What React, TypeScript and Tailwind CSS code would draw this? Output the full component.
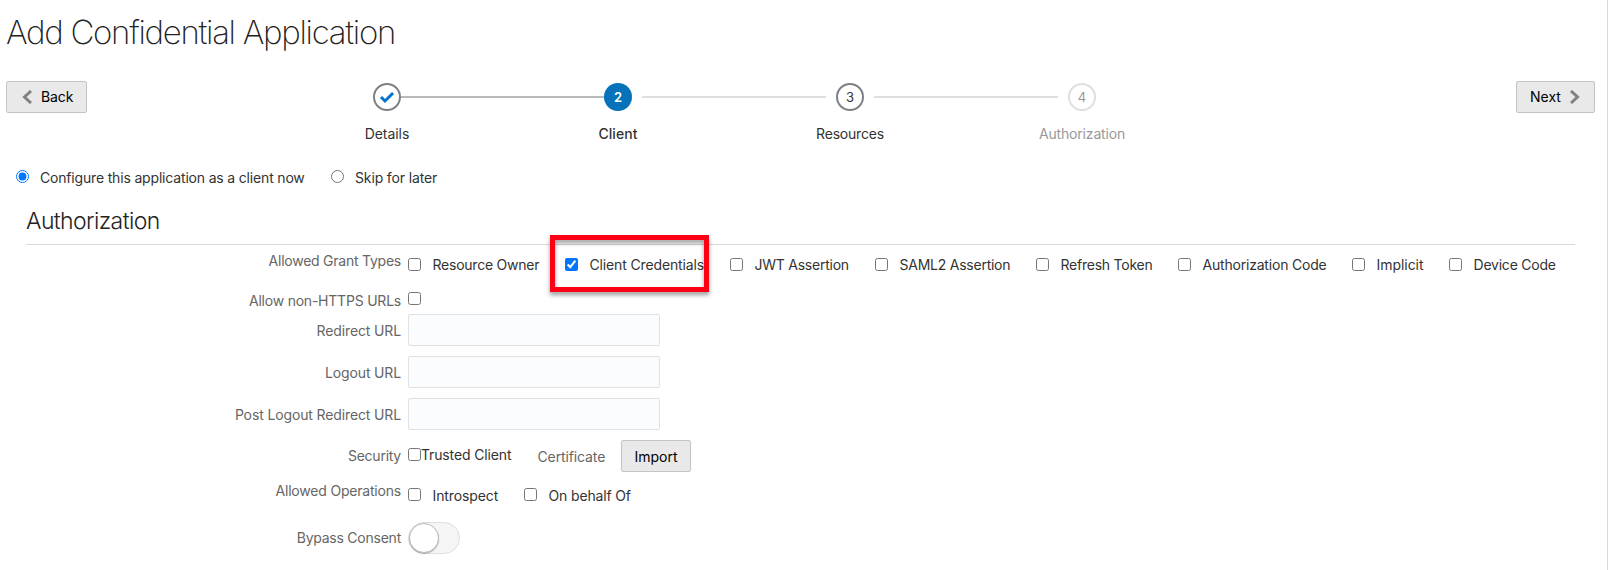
import type { ReactNode } from "react";

type CheckProps = { label: string; checked?: boolean; textClass?: string; boxClass?: string };

function Check({ label, checked = false, textClass = "tracking-[-0.24px]", boxClass = "mt-[3px]" }: CheckProps) {
  return (
    <label className="flex items-start gap-[11.5px]">
      <input type="checkbox" defaultChecked={checked} className={"size-[13px] shrink-0 " + boxClass} />
      <span className={"whitespace-nowrap " + textClass}>{label}</span>
    </label>
  );
}

type RowProps = { label: string; className: string; labelClass: string; children: ReactNode };

function Row({ label, className, labelClass, children }: RowProps) {
  return (
    <div className={"flex gap-[7px] " + className}>
      <div className={"w-[401px] shrink-0 text-right text-[#666] " + labelClass}>{label}</div>
      {children}
    </div>
  );
}

function UrlInput() {
  return <input type="text" className="h-8 w-[252px] rounded-[2px] border border-[#dfe1e3] bg-[#fbfcfe] px-2" />;
}

type StepProps = { title: string; circle: string; titleClass: string; children: ReactNode };

function Step({ title, circle, titleClass, children }: StepProps) {
  return (
    <div className="flex w-7 flex-col items-center">
      <div className={"flex size-7 items-center justify-center rounded-full text-[13px] " + circle}>{children}</div>
      <div className={"mt-[13px] whitespace-nowrap " + titleClass}>{title}</div>
    </div>
  );
}

export default function App() {
  return (
    <main className="h-[570px] w-[1608px] overflow-hidden border-r border-[#d9d9d9] bg-white font-['Inter',sans-serif] text-[14px] leading-5 text-[#333]">
      <h1 className="h-[81px] pt-[12px] pl-[6px] text-[33px] leading-10 font-extralight tracking-[-1.3px] text-[#222]">
        Add Confidential Application
      </h1>

      <div className="flex h-[87px] items-start">
        <button className="ml-[6px] flex h-8 w-[81px] items-center rounded-[2px] border border-[#c4c4c4] bg-[#e9e9e9] pl-[15px] text-black">
          <svg width="10" height="14" viewBox="0 0 10 14" fill="none" stroke="#808284" strokeWidth="3">
            <path d="M9 1 L2.5 7 L9 13" />
          </svg>
          <span className="ml-[9px] tracking-[-0.1px]">Back</span>
        </button>

        <div className="mt-[2px] ml-[286px] flex items-start">
          <Step title="Details" circle="border-2 border-[#7d8185]" titleClass="tracking-[-0.05px]">
            <svg width="16" height="13" viewBox="0 0 16 13" fill="none" stroke="#0572ce" strokeWidth="3" strokeLinecap="square">
              <path d="M3 7 L6 10 L13 3" />
            </svg>
          </Step>
          <div className="mt-[13px] h-[2px] w-[203px] bg-[#b9b9b9]" />
          <Step title="Client" circle="bg-[#0572b9] text-white font-semibold" titleClass="font-medium tracking-[0.08px]">
            2
          </Step>
          <div className="mx-[10px] mt-[13px] h-[2px] w-[184px] bg-[#dfdfdf]" />
          <Step title="Resources" circle="border-2 border-[#7d8185]" titleClass="tracking-[-0.2px]">
            3
          </Step>
          <div className="mx-[10px] mt-[13px] h-[2px] w-[184px] bg-[#dfdfdf]" />
          <Step title="Authorization" circle="border-2 border-[#dfdfdf] text-[#999]" titleClass="text-[#999] tracking-[-0.16px]">
            4
          </Step>
        </div>

        <button className="mr-3 ml-auto flex h-8 w-[79px] items-center rounded-[2px] border border-[#c4c4c4] bg-[#e9e9e9] pl-[13px] text-black">
          <span>Next</span>
          <svg className="ml-[9px]" width="10" height="14" viewBox="0 0 10 14" fill="none" stroke="#808284" strokeWidth="3">
            <path d="M1 1 L7.5 7 L1 13" />
          </svg>
        </button>
      </div>

      <div className="flex h-[36px] items-start pl-4">
        <label className="flex w-[315px] items-start gap-[11px]">
          <input type="radio" name="mode" defaultChecked className="mt-[2px] size-[13px]" />
          <span className="tracking-[-0.175px]">Configure this application as a client now</span>
        </label>
        <label className="flex items-start gap-[11px]">
          <input type="radio" name="mode" className="mt-[2px] size-[13px]" />
          <span className="tracking-[-0.14px]">Skip for later</span>
        </label>
      </div>

      <h2 className="mr-8 ml-[26px] h-[41px] border-b border-[#d9d9d9] pt-[3px] text-[23px] leading-[28px] font-light tracking-[-0.6px] text-[#222]">
        Authorization
      </h2>

      <Row label="Allowed Grant Types" className="h-[41px]" labelClass="pt-[6px] tracking-[-0.24px]">
        <div className="relative grid grid-cols-[157px_165px_145px_161px_142px_174px_97px_110px] pt-[10px]">
          <Check label="Resource Owner" />
          <Check label="Client Credentials" checked textClass="tracking-[-0.14px]" />
          <Check label="JWT Assertion" />
          <Check label="SAML2 Assertion" />
          <Check label="Refresh Token" />
          <Check label="Authorization Code" textClass="tracking-[-0.2px]" />
          <Check label="Implicit" textClass="tracking-[-0.05px]" />
          <Check label="Device Code" textClass="tracking-[-0.22px]" />
          <div className="pointer-events-none absolute top-[-10px] left-[142px] h-[57px] w-[159px] border-[5px] border-[#fe0016] drop-shadow-[0_3px_2px_rgba(0,0,0,0.4)]" />
        </div>
      </Row>
      <Row label="Allow non-HTTPS URLs" className="h-[28px]" labelClass="pt-[5px] tracking-[-0.22px]">
        <input type="checkbox" className="mt-[6px] size-[13px]" />
      </Row>
      <Row label="Redirect URL" className="h-[42px]" labelClass="pt-[7px] tracking-[-0.13px]">
        <UrlInput />
      </Row>
      <Row label="Logout URL" className="h-[42px]" labelClass="pt-[7px] tracking-[-0.15px]">
        <UrlInput />
      </Row>
      <Row label="Post Logout Redirect URL" className="h-[42px]" labelClass="pt-[7px] tracking-[-0.13px]">
        <UrlInput />
      </Row>
      <Row label="Security" className="h-[41px]" labelClass="pt-[6px] tracking-[-0.25px]">
        <div className="flex items-start">
          <label className="flex w-[129px] items-start pt-[5px]">
            <input type="checkbox" className="mt-[3px] size-[13px]" />
            <span className="tracking-[-0.14px]">Trusted Client</span>
          </label>
          <span className="w-[84px] pt-[7px] pl-[0.5px] tracking-[-0.12px] text-[#666]">Certificate</span>
          <button className="h-8 w-[70px] rounded-[2px] border border-[#c4c4c4] bg-[#e9e9e9] pt-[1px] text-black">Import</button>
        </div>
      </Row>
      <Row label="Allowed Operations" className="h-[41px]" labelClass="tracking-[-0.2px]">
        <div className="grid grid-cols-[116px_110px] pt-[5px]">
          <Check label="Introspect" textClass="tracking-[-0.1px]" boxClass="mt-[2px]" />
          <Check label="On behalf Of" textClass="tracking-[-0.15px]" boxClass="mt-[2px]" />
        </div>
      </Row>
      <Row label="Bypass Consent" className="h-8" labelClass="pt-[6px] tracking-[-0.24px]">
        <div className="flex h-8 w-[52px] items-center rounded-full border border-[#dfdfdf] bg-[#f5f5f5]">
          <div className="size-[30px] rounded-full border border-[#b9b9b9] bg-white shadow-[0_1px_1px_rgba(0,0,0,0.25)]" />
        </div>
      </Row>
    </main>
  );
}
